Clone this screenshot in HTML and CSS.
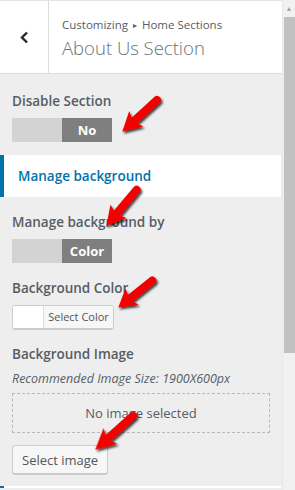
FILE: index.html
```html
<!DOCTYPE html>
<html lang="en">
<head>
    <meta charset="UTF-8">
    <meta name="viewport" content="width=device-width, initial-scale=1.0">
    <title>About Us Section</title>
    <link rel="stylesheet" href="styles.css">
</head>
<body>
    <div class="panel">
        <div class="header">
            <div class="back">
                <svg width="9" height="13" viewBox="0 0 9 13"><path d="M7 1.5 L2 6.5 L7 11.5" fill="none" stroke="#23282d" stroke-width="2.4"/></svg>
            </div>
            <div class="titles">
                <div class="crumbs">Customizing <span class="sep">&#9656;</span> Home Sections</div>
                <div class="title">About Us Section</div>
            </div>
        </div>

        <div class="control first">
            <div class="label">Disable Section</div>
            <div class="toggle"><span class="off"></span><span class="on">No</span></div>
        </div>

        <div class="accordion">Manage background</div>

        <div class="control">
            <div class="label">Manage background by</div>
            <div class="toggle"><span class="off"></span><span class="on">Color</span></div>
        </div>

        <div class="control">
            <div class="label">Background Color</div>
            <div class="color-btn"><span class="swatch"></span><span class="color-text">Select Color</span></div>
        </div>

        <div class="control">
            <div class="label">Background Image</div>
            <div class="hint">Recommended Image Size: 1900X600px</div>
            <div class="placeholder">No image selected</div>
            <button type="button" class="btn">Select image</button>
        </div>

        <div class="accordion next"></div>

        <svg class="arrows" width="283" height="490" viewBox="0 0 283 490">
            <defs>
                <filter id="shadow" x="-30%" y="-30%" width="160%" height="160%">
                    <feDropShadow dx="1.5" dy="2" stdDeviation="1.2" flood-color="#000" flood-opacity="0.75"/>
                </filter>
                <g id="arrow">
                    <line x1="-46" y1="0" x2="-12" y2="0" stroke="#f50000" stroke-width="8" stroke-linecap="round"/>
                    <polygon points="1,0 -18,-10.5 -14,0 -18,10.5" fill="#f50000"/>
                </g>
            </defs>
            <g filter="url(#shadow)">
                <use href="#arrow" transform="translate(123 131) rotate(137.6)"/>
                <use href="#arrow" transform="translate(107 225) rotate(130)"/>
                <use href="#arrow" transform="translate(119 307) rotate(141.5) scale(0.93 1)"/>
                <use href="#arrow" transform="translate(96 449) rotate(138.2) scale(1.08 1)"/>
            </g>
        </svg>
    </div>
    <div class="scrollbar">
        <div class="scroll-up">&#9650;</div>
        <div class="thumb"></div>
    </div>
</body>
</html>
```

FILE: styles.css
```css
body {
    margin: 0;
    height: 490px;
    overflow: hidden;
    display: flex;
    font-family: "Open Sans", sans-serif;
    background-color: #eee;
    color: #555d66;
}

.panel {
    flex: 1;
    position: relative;
}

.header {
    display: flex;
    height: 74px;
    box-sizing: border-box;
    background: #fff;
    border-top: 1px solid #e5e5e5;
    border-bottom: 1px solid #ddd;
}

.back {
    width: 48px;
    border-right: 1px solid #ddd;
    display: flex;
    align-items: center;
    justify-content: center;
}

.titles {
    padding: 16px 0 0 13px;
}

.crumbs {
    font-size: 11.5px;
    line-height: 16px;
    color: #555d66;
}

.sep {
    font-size: 8px;
    margin: 0 2px;
    vertical-align: 1px;
}

.title {
    font-size: 18.5px;
    font-weight: 300;
    line-height: 30px;
    color: #6b7177;
}

.control {
    padding: 0 12px;
    margin-top: 16px;
}

.control.first {
    margin-top: 18px;
}

.label {
    font-size: 13.5px;
    font-weight: 600;
    line-height: 18px;
    margin-bottom: 8px;
}

.toggle {
    display: flex;
    width: 100px;
    height: 24px;
}

.toggle span {
    flex: 1;
}

.toggle .off {
    background: #d3d3d3;
}

.toggle .on {
    background: #7f7f7f;
    color: #fff;
    font-size: 13px;
    font-weight: 700;
    text-align: center;
    line-height: 24px;
}

.accordion {
    margin-top: 13px;
    margin-right: 1px;
    height: 42px;
    background: #fff;
    border-left: 4px solid #0073aa;
    color: #0073aa;
    font-size: 13.5px;
    font-weight: 600;
    line-height: 42px;
    padding-left: 14px;
}

.accordion.next {
    margin-top: 12px;
    height: 2px;
}

.color-btn {
    display: flex;
    width: 100px;
    height: 22px;
    border: 1px solid #ccc;
    border-radius: 3px;
    box-shadow: 0 1px 0 #ccc;
    overflow: hidden;
}

.swatch {
    width: 30px;
    background: #fff;
    border-right: 1px solid #ddd;
}

.color-text {
    flex: 1;
    background: #f7f7f7;
    font-size: 11px;
    line-height: 22px;
    text-align: center;
    color: #555;
}

.hint {
    font-size: 12.5px;
    font-style: italic;
    line-height: 18px;
    margin-top: -1px;
    margin-bottom: 5px;
}

.placeholder {
    height: 38px;
    border: 1px dashed #b4b9be;
    text-align: center;
    line-height: 38px;
    font-size: 13px;
    color: #555d66;
}

.btn {
    margin-top: 12px;
    height: 29px;
    padding: 0 9px;
    border: 1px solid #ccc;
    border-radius: 3px;
    background: #f7f7f7;
    box-shadow: 0 1px 0 #ccc;
    font-family: "Open Sans", sans-serif;
    font-size: 13px;
    color: #555;
}

.arrows {
    position: absolute;
    top: 0;
    left: 0;
    pointer-events: none;
}

.scrollbar {
    width: 12px;
    background: #f1f1f1;
    border-left: 1px solid #e8e8e8;
}

.scroll-up {
    height: 17px;
    font-size: 7px;
    line-height: 17px;
    text-align: center;
    color: #a3a3a3;
}

.thumb {
    margin-left: 1px;
    height: 336px;
    background: #c1c1c1;
}
```
